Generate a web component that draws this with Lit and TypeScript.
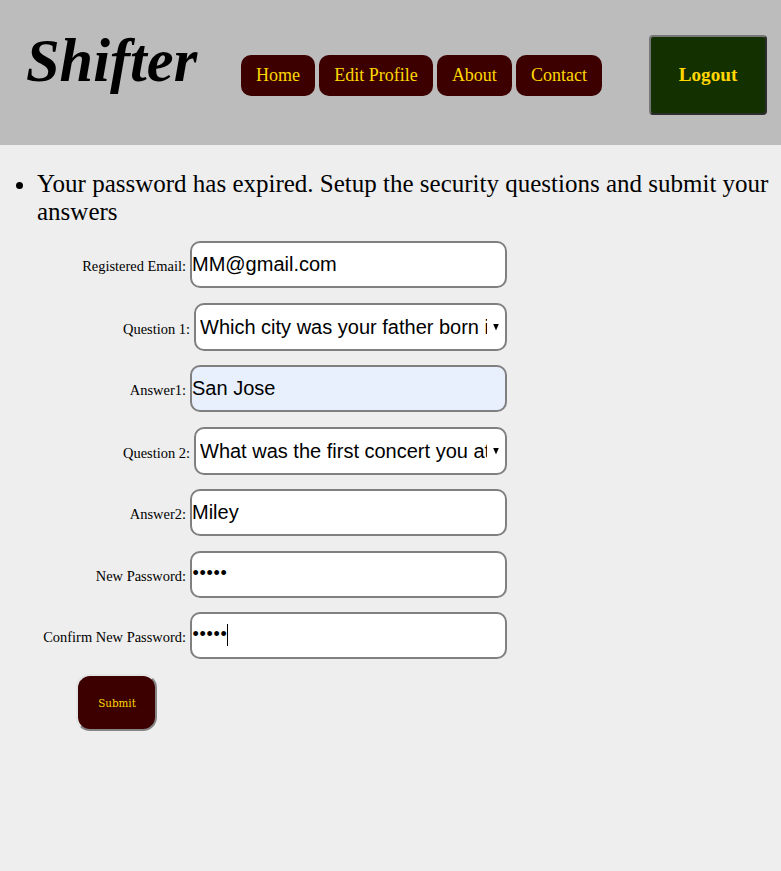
import { LitElement, html, css } from "lit";
import { customElement } from "lit/decorators.js";
import { classMap } from "lit/directives/class-map.js";

interface Field {
  label: string;
  value: string;
  kind: "text" | "select" | "dots";
  filled?: boolean;
  focused?: boolean;
}

const FIELDS: Field[] = [
  { label: "Registered Email:", value: "MM@gmail.com", kind: "text" },
  { label: "Question 1:", value: "Which city was your father born in?", kind: "select" },
  { label: "Answer1:", value: "San Jose", kind: "text", filled: true },
  { label: "Question 2:", value: "What was the first concert you attended?", kind: "select" },
  { label: "Answer2:", value: "Miley", kind: "text" },
  { label: "New Password:", value: "•••••", kind: "dots" },
  { label: "Confirm New Password:", value: "•••••", kind: "dots", focused: true },
];

@customElement("app-root")
export class AppRoot extends LitElement {
  static styles = css`
    :host {
      display: block;
      min-height: 871px;
      background: #eeeeee;
      color: #000;
      font-family: "Liberation Serif", serif;
    }
    * { box-sizing: border-box; }
    header {
      display: flex;
      height: 145px;
      background: #bcbcbc;
      padding: 0 14px 0 26px;
      align-items: flex-start;
    }
    .logo {
      margin: 27px 0 0;
      width: 215px;
      font: italic bold 60.4px/68px "Liberation Serif", serif;
    }
    nav { display: flex; gap: 4.2px; margin-top: 55px; }
    nav a {
      height: 41px;
      padding: 0 15px;
      border-radius: 10px;
      background: #3c0000;
      color: #ffd700;
      font-size: 18px;
      line-height: 41px;
      white-space: nowrap;
    }
    .logout {
      margin: 35px 0 0 auto;
      width: 118px;
      height: 80px;
      padding: 0;
      border: 2px solid;
      border-color: #767676 #2d2d2d #2d2d2d #767676;
      border-radius: 4px;
      background: #123000;
      color: #ffd700;
      font: bold 19.2px "Liberation Serif", serif;
    }
    .messages {
      margin: 25px 0 0;
      padding: 0 0 0 37px;
      font-size: 25px;
      line-height: 28px;
    }
    .form { width: 507px; margin-top: 15px; }
    .row {
      display: flex;
      justify-content: flex-end;
      gap: 4px;
      height: 47px;
      margin-bottom: 15px;
    }
    .row:nth-last-child(2) { margin-bottom: 14px; }
    .label { font-size: 14.45px; line-height: 50px; white-space: nowrap; }
    .row.tall .label { line-height: 52px; }
    .box {
      display: flex;
      align-items: center;
      width: 317px;
      height: 47px;
      border: 2px solid #808080;
      border-radius: 10px;
      background: #fff;
      font: 20px/43px "Liberation Sans", sans-serif;
      white-space: nowrap;
    }
    .select { width: 313px; height: 48px; padding: 0 5px 0 4px; line-height: 44px; }
    .select .value { width: 287px; overflow: hidden; }
    .arrow {
      width: 6px;
      height: 7px;
      margin-left: 6px;
      background: #000;
      clip-path: polygon(0 0, 100% 0, 50% 100%);
    }
    .filled { background: #e8f0fe; }
    .dots .value { font-size: 18px; letter-spacing: 0.7px; line-height: 41px; }
    .dots { padding: 0 0 2px 0.4px; }
    .caret { width: 1px; height: 22px; margin-left: -0.5px; background: #000; }
    .submit {
      display: block;
      margin: 1px 0 0 76px;
      width: 81px;
      height: 57px;
      padding: 0 0 0 1px;
      border: 2px solid;
      border-color: #e4e4e4 #858585 #858585 #e4e4e4;
      border-radius: 14px;
      background: #3c0000;
      color: #ffd700;
      font: 11.5px "DejaVu Serif Condensed", "DejaVu Serif", serif;
      font-stretch: condensed;
    }
  `;

  private renderField(f: Field) {
    const select = f.kind === "select";
    const cls = { box: true, select, dots: f.kind === "dots", filled: !!f.filled };
    return html`<div class=${classMap({ row: true, tall: select })}>
      <span class="label">${f.label}</span>
      <div class=${classMap(cls)}>
        <span class="value">${f.value}</span>
        ${select ? html`<span class="arrow"></span>` : ""}
        ${f.focused ? html`<span class="caret"></span>` : ""}
      </div>
    </div>`;
  }

  render() {
    return html`
      <header>
        <h1 class="logo">Shifter</h1>
        <nav>
          ${["Home", "Edit Profile", "About", "Contact"].map((t) => html`<a>${t}</a>`)}
        </nav>
        <button class="logout">Logout</button>
      </header>
      <ul class="messages">
        <li>Your password has expired. Setup the security questions and submit your answers</li>
      </ul>
      <div class="form">${FIELDS.map((f) => this.renderField(f))}</div>
      <button class="submit">Submit</button>
    `;
  }
}
